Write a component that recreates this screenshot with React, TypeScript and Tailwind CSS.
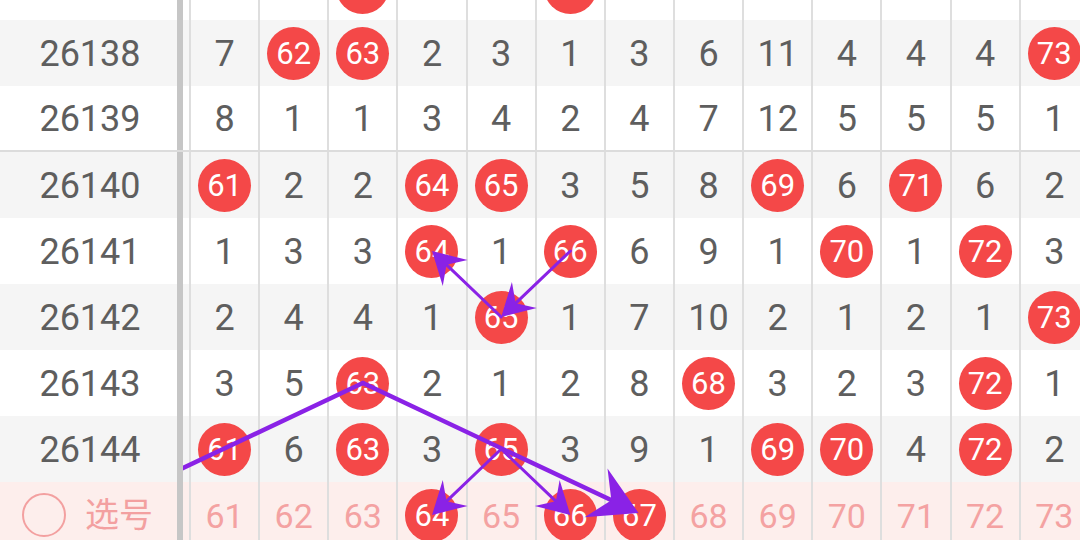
import React from "react";

type Cell = number | { b: number };

const B = (n: number): Cell => ({ b: n });

const rows: { id: string; bg: string; sep?: boolean; cells: Cell[] }[] = [
  { id: "26137", bg: "bg-white", cells: [6, 1, B(63), 1, 2, B(66), 2, 5, 10, 3, 3, 3, 7] },
  { id: "26138", bg: "bg-[#f5f5f5]", cells: [7, B(62), B(63), 2, 3, 1, 3, 6, 11, 4, 4, 4, B(73)] },
  { id: "26139", bg: "bg-white", sep: true, cells: [8, 1, 1, 3, 4, 2, 4, 7, 12, 5, 5, 5, 1] },
  { id: "26140", bg: "bg-[#f5f5f5]", cells: [B(61), 2, 2, B(64), B(65), 3, 5, 8, B(69), 6, B(71), 6, 2] },
  { id: "26141", bg: "bg-white", cells: [1, 3, 3, B(64), 1, B(66), 6, 9, 1, B(70), 1, B(72), 3] },
  { id: "26142", bg: "bg-[#f5f5f5]", cells: [2, 4, 4, 1, B(65), 1, 7, 10, 2, 1, 2, 1, B(73)] },
  { id: "26143", bg: "bg-white", cells: [3, 5, B(63), 2, 1, 2, 8, B(68), 3, 2, 3, B(72), 1] },
  { id: "26144", bg: "bg-[#f5f5f5]", cells: [B(61), 6, B(63), 3, B(65), 3, 9, 1, B(69), B(70), 4, B(72), 2] },
];

const picks = [61, 62, 63, 64, 65, 66, 67, 68, 69, 70, 71, 72, 73];
const picked = new Set([64, 66, 67]);

const FONT = "font-['Roboto','Noto_Sans_CJK_SC',sans-serif]";

function Ball({ n }: { n: number }) {
  return (
    <div className="w-[53px] h-[53px] rounded-full bg-[#f44848] text-white text-[31px] leading-none flex items-center justify-center">
      {n}
    </div>
  );
}

function Row({ id, bg, sep, cells }: { id: string; bg: string; sep?: boolean; cells: Cell[] }) {
  return (
    <div className={`flex h-[66px] shrink-0 ${bg} ${sep ? "border-b-2 border-[#dcdcdc]" : ""}`}>
      <div className="w-[177px] shrink-0 flex items-center justify-center pl-[3px] pt-[1px] text-[36px] leading-none text-[#5e5e5e]">
        {id}
      </div>
      <div className="w-[6px] shrink-0 bg-[#c6c6c6]" />
      <div className="w-[6px] shrink-0" />
      {cells.map((c, i) => (
        <div
          key={i}
          className="w-[69.15px] shrink-0 border-l-2 border-[#dedede] flex items-center justify-center pt-[1px] text-[36px] leading-none text-[#5e5e5e]"
        >
          {typeof c === "number" ? c : <Ball n={c.b} />}
        </div>
      ))}
    </div>
  );
}

const cx = (i: number) => 224.6 + 69.15 * i;
const cy = (r: number) => 53 + 66 * r;

function Arrow({
  x1,
  y1,
  x2,
  y2,
  w,
  L,
  W,
  n,
  head = true,
}: {
  x1: number;
  y1: number;
  x2: number;
  y2: number;
  w: number;
  L: number;
  W: number;
  n: number;
  head?: boolean;
}) {
  const dx = x2 - x1;
  const dy = y2 - y1;
  const len = Math.hypot(dx, dy);
  const ux = dx / len;
  const uy = dy / len;
  const px = -uy;
  const py = ux;
  const bx = x2 - L * ux;
  const by = y2 - L * uy;
  const nx = x2 - n * ux;
  const ny = y2 - n * uy;
  const pts = [
    [x2, y2],
    [bx + W * px, by + W * py],
    [nx, ny],
    [bx - W * px, by - W * py],
  ]
    .map((p) => p.join(","))
    .join(" ");
  return (
    <g>
      <line
        x1={x1}
        y1={y1}
        x2={head ? nx + ux * 2 : x2}
        y2={head ? ny + uy * 2 : y2}
        stroke="#8a22e6"
        strokeWidth={w}
        strokeLinecap="round"
      />
      {head && <polygon points={pts} fill="#8a22e6" />}
    </g>
  );
}

export default function App() {
  return (
    <div className={`relative w-[1080px] h-[540px] overflow-hidden bg-white ${FONT}`}>
      <div className="flex flex-col mt-[-46px]">
        {rows.map((r) => (
          <Row key={r.id} {...r} />
        ))}
        <div className="flex h-[66px] shrink-0 bg-[#fdeeec]">
          <div className="w-[177px] shrink-0 flex items-center pl-[22px] gap-[19px]">
            <div className="w-[44px] h-[44px] rounded-full border-2 border-[#f3a0a0]" />
            <span className="text-[34px] leading-none text-[#f3a0a0]">选号</span>
          </div>
          <div className="w-[6px] shrink-0 bg-[#c6c6c6]" />
          <div className="w-[6px] shrink-0" />
          {picks.map((p) => (
            <div
              key={p}
              className="w-[69.15px] shrink-0 border-l-2 border-[#dedede] flex items-center justify-center pt-[1px] text-[34px] leading-none text-[#f4a2a2]"
            >
              {picked.has(p) ? <Ball n={p} /> : p}
            </div>
          ))}
        </div>
      </div>
      <svg className="absolute top-0 left-0 pointer-events-none" width="1080" height="540" viewBox="0 0 1080 540">
        <defs>
          <clipPath id="scrollClip">
            <rect x="183" y="0" width="897" height="540" />
          </clipPath>
        </defs>
        <g clipPath="url(#scrollClip)">
          <Arrow x1={cx(5)} y1={cy(3)} x2={cx(4)} y2={cy(4)} w={3} L={32} W={18} n={20} />
          <Arrow x1={cx(4)} y1={cy(4)} x2={cx(3)} y2={cy(3)} w={3} L={32} W={18} n={20} />
          <Arrow x1={cx(2)} y1={cy(5)} x2={80} y2={cy(5) + (cx(2) - 80) * 0.472} w={4.5} L={0} W={0} n={0} head={false} />
          <Arrow x1={cx(2)} y1={cy(5)} x2={cx(6) - 1} y2={cy(7) - 2} w={4.5} L={47} W={27} n={30} />
          <Arrow x1={cx(4)} y1={cy(6)} x2={cx(3)} y2={cy(7)} w={3} L={32} W={18} n={20} />
          <Arrow x1={cx(4)} y1={cy(6)} x2={cx(5)} y2={cy(7)} w={3} L={32} W={18} n={20} />
        </g>
      </svg>
    </div>
  );
}
